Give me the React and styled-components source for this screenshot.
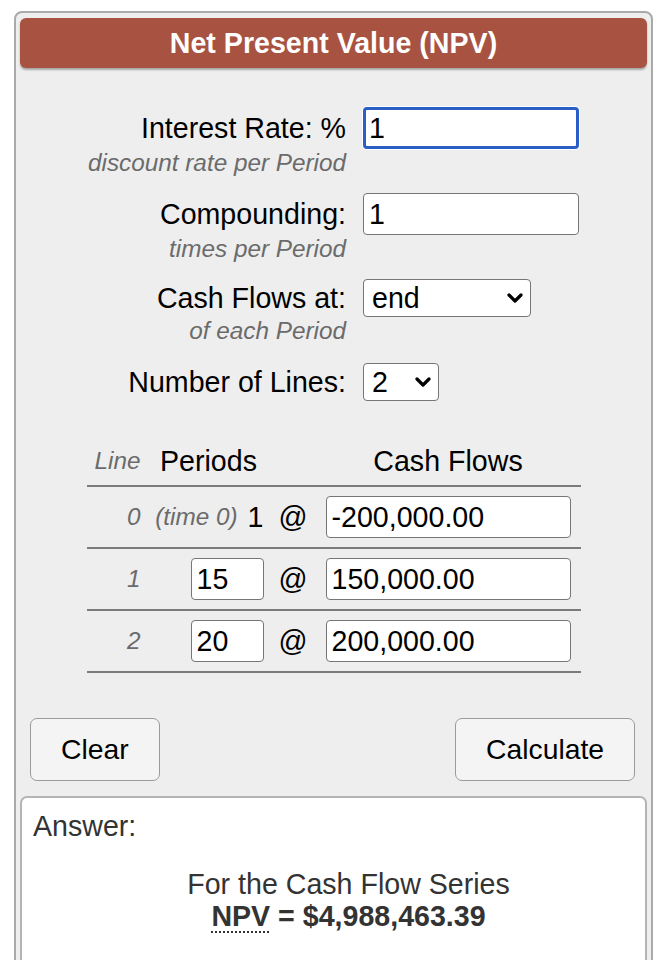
import React from 'react';
import styled, { createGlobalStyle, css } from 'styled-components';

const GlobalStyle = createGlobalStyle`
  html, body { margin: 0; padding: 0; background: #fff; overflow: hidden; }
  body { font-family: "Liberation Sans", Arial, Helvetica, sans-serif; }
  *, *::before, *::after { box-sizing: border-box; }
`;

const FS = '28.6px';
const FS_SMALL = '24.3px';

const Page = styled.div`
  padding: 11px 0 0 14px;
`;

const Calculator = styled.div`
  width: 639px;
  height: 1000px;
  background: #eeeeee;
  border: 2px solid #aaaaaa;
  border-radius: 8px;
  padding: 5px 4px 0;
`;

const TitleBar = styled.h1`
  margin: 0;
  height: 50px;
  line-height: 50px;
  background: #a85341;
  color: #fff;
  font-size: ${FS};
  font-weight: 700;
  text-align: center;
  border-radius: 6px;
  box-shadow: 0 2px 2px rgba(0, 0, 0, 0.3);
`;

const Fields = styled.div`
  margin-top: 39px;
  display: flex;
  flex-direction: column;
  gap: 17px;
`;

const Field = styled.div`
  display: grid;
  grid-template-columns: 326px auto;
  column-gap: 17px;
  align-items: center;
  justify-content: start;
  margin-top: ${(p) => p.$shift || 0}px;
`;

const Label = styled.label`
  grid-column: 1;
  grid-row: 1;
  text-align: right;
  font-size: ${FS};
  line-height: 32px;
  color: #000;
`;

const SubLabel = styled.div`
  grid-column: 1;
  grid-row: 2;
  text-align: right;
  font-size: ${FS_SMALL};
  font-style: italic;
  line-height: 27px;
  color: #6b6b6b;
`;

const Control = styled.div`
  grid-column: 2;
  grid-row: 1;
  display: flex;
`;

const TextInput = styled.input`
  width: ${(p) => p.$w}px;
  height: 42px;
  font-family: inherit;
  font-size: ${FS};
  color: #000;
  background: #fff;
  padding: 0 0 0 5px;
  border: 1px solid #767676;
  border-radius: 4px;
  outline: none;
  ${(p) =>
    p.$focused &&
    css`
      border: 3px solid #2a5fc8;
      padding-left: 3px;
      box-shadow: 0 0 0 1px #fff;
    `}
`;

const SelectWrap = styled.div`
  position: relative;
  width: ${(p) => p.$w}px;
  height: 38px;
`;

const Select = styled.select`
  appearance: none;
  -webkit-appearance: none;
  width: 100%;
  height: 100%;
  font-family: inherit;
  font-size: ${FS};
  color: #000;
  background: #fff;
  padding: 0 0 0 8px;
  border: 1px solid #767676;
  border-radius: 4px;
  outline: none;
`;

const Chevron = styled.svg`
  position: absolute;
  right: 8px;
  top: 50%;
  transform: translateY(-50%);
  pointer-events: none;
`;

const Table = styled.div`
  width: 494px;
  margin: 44px auto 0;
`;

const Row = styled.div`
  display: grid;
  grid-template-columns: 60px 124px 45px 265px;
  align-items: center;
  border-bottom: 2px solid #7b7b7b;
  padding: ${(p) => (p.$head ? '0 0 8px' : '9px 0')};
  font-size: ${FS};
  line-height: 32px;
  color: #000;
`;

const LineNo = styled.div`
  text-align: right;
  padding-right: 6px;
  font-size: ${FS_SMALL};
  font-style: italic;
  color: #6b6b6b;
`;

const HeadCell = styled.div`
  text-align: center;
`;

const PeriodCell = styled.div`
  display: flex;
  justify-content: flex-end;
  align-items: center;
  gap: 10px;
  padding-right: 7px;
`;

const TimeZero = styled.span`
  font-size: ${FS_SMALL};
  font-style: italic;
  color: #6b6b6b;
`;

const At = styled.div`
  text-align: center;
`;

const FlowCell = styled.div`
  display: flex;
  justify-content: center;
`;

const Buttons = styled.div`
  display: flex;
  justify-content: space-between;
  padding: 0 12px 0 10px;
  margin-top: 45px;
`;

const Button = styled.button`
  height: 63px;
  padding: 0 30px;
  font-family: inherit;
  font-size: 28.3px;
  color: #000;
  background: #f4f4f4;
  border: 1px solid #9a9a9a;
  border-radius: 7px;
`;

const Answer = styled.div`
  margin-top: 15px;
  height: 220px;
  background: #fff;
  border: 2px solid #b4b4b4;
  border-radius: 7px;
  padding: 12px 11px;
  font-size: ${FS};
  line-height: 32px;
  color: #333;
`;

const Result = styled.div`
  margin-top: 26px;
  padding-left: 30px;
  text-align: center;
`;

const Strong = styled.div`
  font-weight: 700;
`;

const Abbr = styled.abbr`
  text-decoration: underline dotted;
  text-decoration-thickness: 2px;
  text-underline-offset: 5px;
`;

const ChevronIcon = () => (
  <Chevron width="16" height="10" viewBox="0 0 16 10">
    <path d="M2 2 L8 8 L14 2" fill="none" stroke="#000" strokeWidth="3.2" strokeLinecap="round" strokeLinejoin="round" />
  </Chevron>
);

const rows = [
  { line: 1, period: '15', flow: '150,000.00' },
  { line: 2, period: '20', flow: '200,000.00' },
];

export default function App() {
  return (
    <>
      <GlobalStyle />
      <Page>
        <Calculator>
          <TitleBar>Net Present Value (NPV)</TitleBar>
          <Fields>
            <Field>
              <Label>Interest Rate: %</Label>
              <Control>
                <TextInput $w={216} $focused defaultValue="1" />
              </Control>
              <SubLabel>discount rate per Period</SubLabel>
            </Field>
            <Field>
              <Label>Compounding:</Label>
              <Control>
                <TextInput $w={216} defaultValue="1" />
              </Control>
              <SubLabel>times per Period</SubLabel>
            </Field>
            <Field>
              <Label>Cash Flows at:</Label>
              <Control>
                <SelectWrap $w={168}>
                  <Select defaultValue="end">
                    <option value="end">end</option>
                    <option value="beginning">beginning</option>
                  </Select>
                  <ChevronIcon />
                </SelectWrap>
              </Control>
              <SubLabel>of each Period</SubLabel>
            </Field>
            <Field $shift={2}>
              <Label>Number of Lines:</Label>
              <Control>
                <SelectWrap $w={76}>
                  <Select defaultValue="2">
                    <option value="1">1</option>
                    <option value="2">2</option>
                    <option value="3">3</option>
                  </Select>
                  <ChevronIcon />
                </SelectWrap>
              </Control>
            </Field>
          </Fields>

          <Table>
            <Row $head>
              <LineNo>Line</LineNo>
              <HeadCell>Periods</HeadCell>
              <div />
              <HeadCell>Cash Flows</HeadCell>
            </Row>
            <Row>
              <LineNo>0</LineNo>
              <PeriodCell>
                <TimeZero>(time 0)</TimeZero>
                <span>1</span>
              </PeriodCell>
              <At>@</At>
              <FlowCell>
                <TextInput $w={245} defaultValue="-200,000.00" />
              </FlowCell>
            </Row>
            {rows.map((r) => (
              <Row key={r.line}>
                <LineNo>{r.line}</LineNo>
                <PeriodCell>
                  <TextInput $w={73} defaultValue={r.period} />
                </PeriodCell>
                <At>@</At>
                <FlowCell>
                  <TextInput $w={245} defaultValue={r.flow} />
                </FlowCell>
              </Row>
            ))}
          </Table>

          <Buttons>
            <Button>Clear</Button>
            <Button>Calculate</Button>
          </Buttons>

          <Answer>
            <div>Answer:</div>
            <Result>
              <div>For the Cash Flow Series</div>
              <Strong>
                <Abbr title="Net Present Value">NPV</Abbr> = $4,988,463.39
              </Strong>
            </Result>
          </Answer>
        </Calculator>
      </Page>
    </>
  );
}
